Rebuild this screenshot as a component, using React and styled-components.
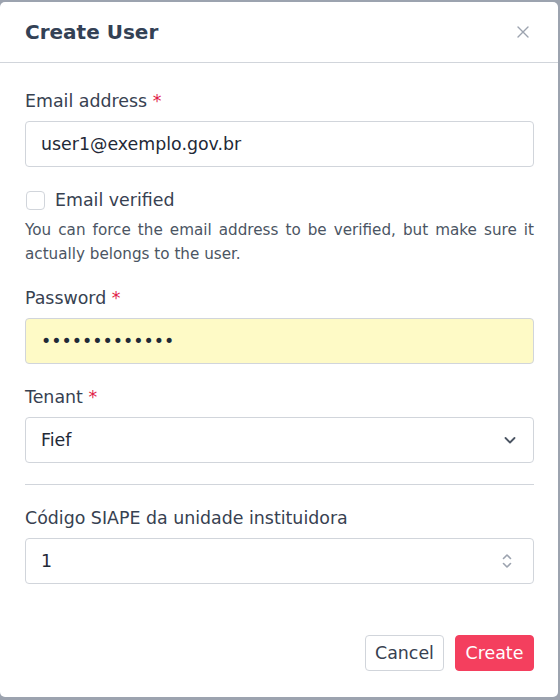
import React from 'react'
import styled, { createGlobalStyle } from 'styled-components'

const GlobalStyle = createGlobalStyle`
  body {
    margin: 0;
    background: #9ca3af;
    font-family: "DejaVu Sans", sans-serif;
  }
`

const Modal = styled.div`
  box-sizing: border-box;
  width: 558px;
  height: 695px;
  margin-top: 2px;
  background: #ffffff;
  border-radius: 5px;
  display: flex;
  flex-direction: column;
`

const Header = styled.header`
  height: 60px;
  display: flex;
  align-items: center;
  justify-content: space-between;
  padding: 0 25px;
  border-bottom: 1px solid #d1d5db;
`

const Title = styled.h3`
  margin: 0;
  font-size: 20px;
  font-weight: 700;
  color: #334155;
`

const CloseButton = styled.button`
  border: none;
  background: none;
  padding: 0;
  width: 16px;
  height: 16px;
  display: flex;
  align-items: center;
  justify-content: center;
  color: #9ca3af;
  margin-right: 2px;
`

const Body = styled.form`
  flex: 1;
  display: flex;
  flex-direction: column;
  padding: 26px 24px 26px 25px;
`

const Field = styled.div`
  display: flex;
  flex-direction: column;
  gap: 8px;
  margin-bottom: ${({ mb }) => mb || '21px'};
`

const Label = styled.label`
  font-size: 17.4px;
  line-height: 24px;
  color: #374151;
`

const Required = styled.span`
  color: #e11d48;
`

const InputBox = styled.div`
  position: relative;
  display: flex;
`

const Input = styled.input`
  box-sizing: border-box;
  width: 100%;
  height: 46px;
  padding: 0 15px;
  border: 1px solid #d1d5db;
  border-radius: 4px;
  background: ${({ filled }) => (filled ? '#fefac6' : '#ffffff')};
  font-family: "DejaVu Sans", sans-serif;
  font-size: 17.4px;
  color: #1f2937;
  outline: none;
  appearance: none;
  -moz-appearance: textfield;
  &::-webkit-inner-spin-button,
  &::-webkit-outer-spin-button {
    -webkit-appearance: none;
    margin: 0;
  }
`

const Select = styled.select`
  box-sizing: border-box;
  width: 100%;
  height: 46px;
  padding: 0 15px;
  border: 1px solid #d1d5db;
  border-radius: 4px;
  background: #ffffff;
  font-family: "DejaVu Sans", sans-serif;
  font-size: 17.4px;
  color: #1f2937;
  appearance: none;
  outline: none;
`

const TrailingIcon = styled.span`
  position: absolute;
  right: ${({ right }) => right || '17px'};
  top: 50%;
  transform: translateY(-50%);
  display: flex;
  pointer-events: none;
  color: ${({ color }) => color || '#4b5563'};
`

const CheckRow = styled.label`
  display: flex;
  align-items: center;
  gap: 10px;
  height: 24px;
  font-size: 17.4px;
  color: #374151;
`

const Checkbox = styled.span`
  box-sizing: border-box;
  width: 19px;
  height: 19px;
  margin-left: 1px;
  border: 1px solid #d1d5db;
  border-radius: 4px;
  background: #ffffff;
`

const Help = styled.p`
  margin: 6px 0 20px;
  font-size: 15.2px;
  line-height: 24px;
  color: #4b5563;
  text-align: justify;
`

const Divider = styled.hr`
  margin: 0 0 21px;
  border: none;
  border-top: 1px solid #d1d5db;
`

const Footer = styled.div`
  margin-top: auto;
  display: flex;
  justify-content: flex-end;
  gap: 11px;
`

const Button = styled.button`
  box-sizing: border-box;
  height: 36px;
  width: 79px;
  padding: 0;
  border-radius: 4px;
  font-family: "DejaVu Sans", sans-serif;
  font-size: 17.4px;
  border: 1px solid ${({ primary }) => (primary ? '#f43f5e' : '#d1d5db')};
  background: ${({ primary }) => (primary ? '#f43f5e' : '#ffffff')};
  color: ${({ primary }) => (primary ? '#ffffff' : '#374151')};
`

const XIcon = () => (
  <svg width="14" height="14" viewBox="0 0 14 14" fill="none" stroke="currentColor" strokeWidth="1.4" strokeLinecap="round">
    <path d="M2 2l10 10M12 2L2 12" />
  </svg>
)

const ChevronDown = () => (
  <svg width="14" height="14" viewBox="0 0 14 14" fill="none" stroke="currentColor" strokeWidth="1.8" strokeLinecap="round" strokeLinejoin="round">
    <path d="M2.5 5l4.5 4.5L11.5 5" />
  </svg>
)

const UpDown = () => (
  <svg width="12" height="18" viewBox="0 0 12 18" fill="none" stroke="currentColor" strokeWidth="1.6" strokeLinecap="round" strokeLinejoin="round">
    <path d="M2.5 6.5L6 3l3.5 3.5M2.5 11.5L6 15l3.5-3.5" />
  </svg>
)

export default function App() {
  return (
    <>
      <GlobalStyle />
      <Modal>
        <Header>
          <Title>Create User</Title>
          <CloseButton type="button" aria-label="Close">
            <XIcon />
          </CloseButton>
        </Header>
        <Body onSubmit={e => e.preventDefault()}>
          <Field>
            <Label>
              Email address <Required>*</Required>
            </Label>
            <Input type="email" defaultValue="user1@exemplo.gov.br" />
          </Field>
          <CheckRow>
            <Checkbox />
            Email verified
          </CheckRow>
          <Help>
            You can force the email address to be verified, but make sure it actually belongs to the user.
          </Help>
          <Field>
            <Label>
              Password <Required>*</Required>
            </Label>
            <Input type="password" filled defaultValue="abcdefghijklm" />
          </Field>
          <Field>
            <Label>
              Tenant <Required>*</Required>
            </Label>
            <InputBox>
              <Select defaultValue="fief">
                <option value="fief">Fief</option>
              </Select>
              <TrailingIcon>
                <ChevronDown />
              </TrailingIcon>
            </InputBox>
          </Field>
          <Divider />
          <Field mb="0">
            <Label>Código SIAPE da unidade instituidora</Label>
            <InputBox>
              <Input type="number" defaultValue="1" />
              <TrailingIcon right="21px" color="#9ca3af">
                <UpDown />
              </TrailingIcon>
            </InputBox>
          </Field>
          <Footer>
            <Button type="button">Cancel</Button>
            <Button type="submit" primary>
              Create
            </Button>
          </Footer>
        </Body>
      </Modal>
    </>
  )
}
